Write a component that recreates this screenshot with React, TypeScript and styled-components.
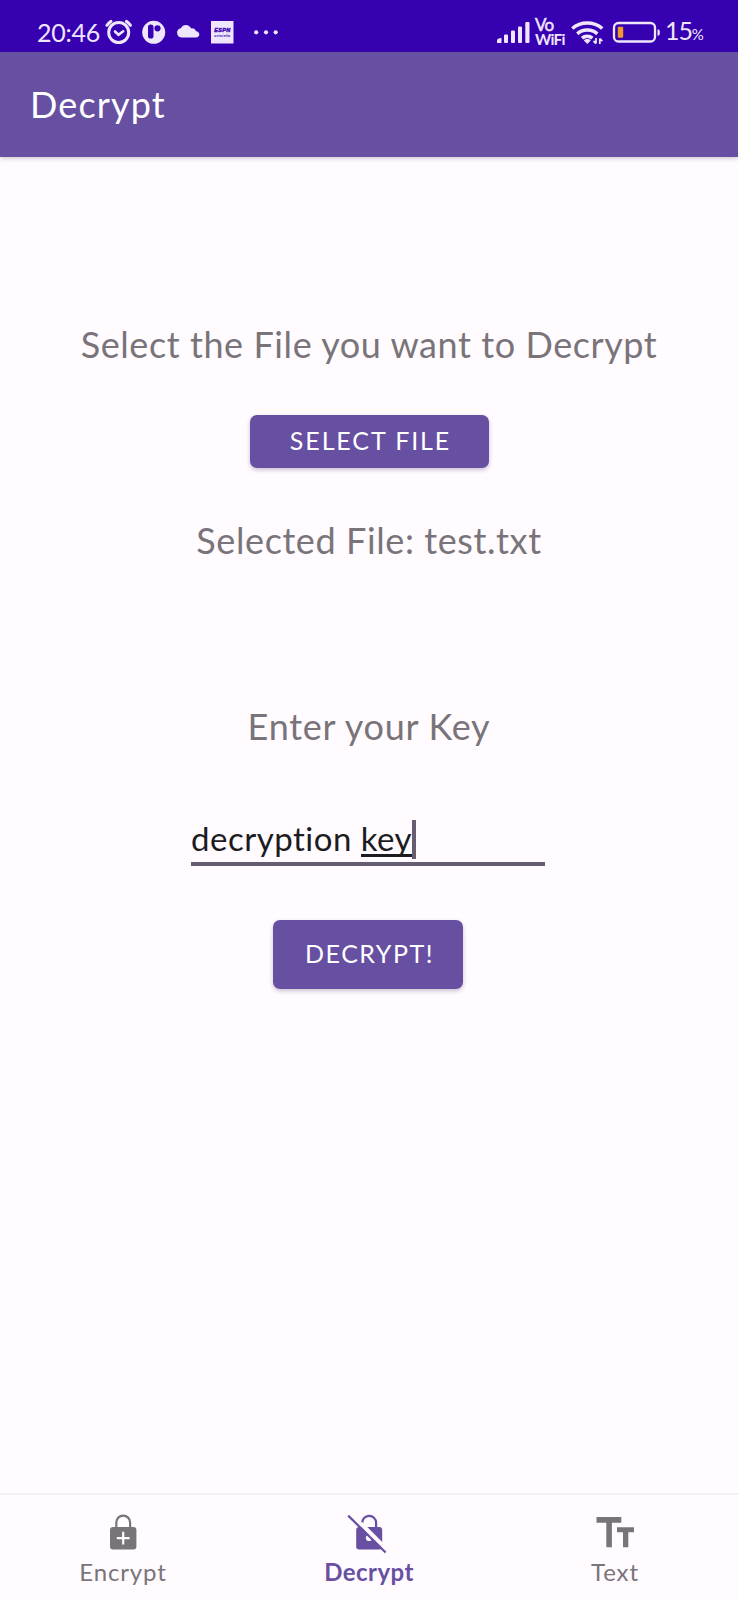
import React from 'react';
import styled, { createGlobalStyle } from 'styled-components';

const GlobalStyle = createGlobalStyle`
  * { box-sizing: border-box; }
  body { margin: 0; background: #fffbfe; font-family: Lato, "Open Sans", sans-serif; }
`;

const Screen = styled.div`
  display: flex;
  flex-direction: column;
  width: 738px;
  height: 1600px;
  background: #fffbfe;
  overflow: hidden;
`;

const StatusBar = styled.header`
  display: flex;
  justify-content: space-between;
  height: 52px;
  padding: 12px 38px 0 37px;
  background: #3700b1;
  color: #efe6fd;
`;

const StatusGroup = styled.div`
  display: flex;
  align-items: center;
  height: 40px;
`;

const Clock = styled.span`
  width: 68px;
  font-size: 25px;
  line-height: 40px;
  letter-spacing: -0.25px;
  white-space: nowrap;
`;

const NetworkLabel = styled.div`
  display: flex;
  flex-direction: column;
  width: 35px;
  font-size: 15.5px;
  font-weight: 700;
  line-height: 14px;
  letter-spacing: -0.8px;
`;

const NetworkLine = styled.span<{ $large?: boolean }>`
  height: 14px;
  font-size: ${(p) => (p.$large ? 17 : 15.5)}px;
  font-weight: ${(p) => (p.$large ? 400 : 700)};
  -webkit-text-stroke: ${(p) => (p.$large ? 0.5 : 0)}px currentColor;
`;

const BatteryLevel = styled.span`
  width: 35px;
  font-size: 25px;
  line-height: 40px;
  letter-spacing: -1.1px;
  white-space: nowrap;

  small { font-size: 15px; }
`;

const AppBar = styled.div`
  position: relative;
  display: flex;
  flex: none;
  height: 105px;
  padding: 30px 30px;
  background: #6750a2;
  box-shadow: 0 1px 5px rgba(60, 45, 80, 0.3);
`;

const Title = styled.h1`
  margin: 0;
  color: #fff;
  font-size: 36px;
  font-weight: 400;
  line-height: 44px;
  letter-spacing: 1.15px;
`;

const Content = styled.main`
  display: flex;
  flex: 1;
  flex-direction: column;
  align-items: center;
  padding-top: 165px;
`;

const Label = styled.p<{ $top?: number; $spacing: number }>`
  margin: ${(p) => p.$top ?? 0}px 0 0;
  color: #79747a;
  font-size: 36px;
  line-height: 44px;
  letter-spacing: ${(p) => p.$spacing}px;
  white-space: nowrap;
`;

const Button = styled.button<{ $width: number; $height: number; $top: number; $spacing: number; $shift: number }>`
  width: ${(p) => p.$width}px;
  height: ${(p) => p.$height}px;
  margin: ${(p) => p.$top}px ${(p) => p.$shift}px 0 0;
  padding: 0 0 3px 3px;
  border: 0;
  border-radius: 7px;
  background: #674fa2;
  box-shadow: 0 2px 4px rgba(60, 45, 90, 0.28);
  color: #fff;
  font-family: inherit;
  font-size: 25px;
  line-height: 30px;
  letter-spacing: ${(p) => p.$spacing}px;
  white-space: nowrap;
`;

const Field = styled.div`
  display: flex;
  align-items: flex-start;
  width: 354px;
  height: 46px;
  margin: 72px 2px 0 0;
  border-bottom: 4px solid #665d70;
  color: #1c1b1f;
  font-size: 33px;
  line-height: 37px;
  letter-spacing: 0.5px;
  white-space: pre;
`;

const Composing = styled.span`
  height: 37px;
  border-bottom: 3px solid #1c1b1f;
`;

const Caret = styled.span`
  width: 4px;
  height: 39px;
  background: #665d70;
`;

const Nav = styled.nav`
  display: grid;
  grid-template-columns: repeat(3, 1fr);
  height: 107px;
  border-top: 2px solid #f5f0f5;
`;

const NavItem = styled.a<{ $active?: boolean; $spacing: number }>`
  display: flex;
  flex-direction: column;
  align-items: center;
  padding-top: 17px;
  color: ${(p) => (p.$active ? '#674fa2' : '#79747a')};
  font-size: 24px;
  font-weight: ${(p) => (p.$active ? 700 : 400)};
  line-height: 30px;
  letter-spacing: ${(p) => p.$spacing}px;

  svg {
    margin-bottom: 5px;
    overflow: visible;
  }
`;

const StatusIcons = () => (
  <svg width="175" height="40" viewBox="105 12 175 40" fill="none">
    <g stroke="#efe6fd" strokeWidth="3" strokeLinecap="round">
      <circle cx="118.700" cy="32.500" r="10" />
      <path d="M107 25.300c1-1.600 2.300-2.900 4-3.900M130.400 25.300c-1-1.600-2.300-2.900-4-3.900" />
      <path d="M115 31.500l3.500 3.300 4.700-3.500" strokeWidth="2.600" />
    </g>
    <circle cx="153.700" cy="32.300" r="11.500" fill="#efe6fd" />
    <rect x="148" y="24.500" width="5.500" height="14" rx="2.600" fill="#3700b1" />
    <circle cx="157.500" cy="28.300" r="3.100" fill="#3700b1" />
    <path d="M181.500 37.500a4.700 4.700 0 0 1-.6-9.300c1.200-2 2.800-3.200 4.900-3.200 2.400 0 4.200 1.300 5.400 3.400 2.600-.2 4.200.8 4.600 2.700 2.200.3 3.500 1.700 3.500 3.500 0 1.700-1.300 2.900-3.300 2.900z" fill="#efe6fd" />
    <rect x="211" y="21" width="22.500" height="22.500" fill="#efe6fd" />
    <text x="214.300" y="32" fontFamily="Liberation Sans" fontSize="5.500" fontWeight="700" fontStyle="italic" fill="#3700b1" stroke="#3700b1" strokeWidth=".4" textLength="16">ESPN</text>
    <text x="214.300" y="36.500" fontFamily="Liberation Sans" fontSize="4" fontWeight="700" fill="#3700b1" textLength="16">cricinfo</text>
    <g fill="#efe6fd">
      <circle cx="256.200" cy="32.300" r="2.100" />
      <circle cx="266" cy="32.300" r="2.100" />
      <circle cx="275.700" cy="32.300" r="2.100" />
    </g>
  </svg>
);

const SignalIcon = () => (
  <svg width="39" height="40" viewBox="496 12 39 40" fill="#efe6fd">
    <path d="M497 43v-2.500c0-1.600 1.500-2.500 4.500-2.500v5z" />
    <rect x="504" y="34.500" width="4" height="8.500" rx="1" />
    <rect x="511" y="30.500" width="4" height="12.500" rx="1" />
    <rect x="518" y="26.500" width="4" height="16.500" rx="1" />
    <rect x="525.300" y="22" width="4.200" height="21" rx="1" />
  </svg>
);

const WifiBatteryIcon = () => (
  <svg width="95" height="40" viewBox="570 12 95 40" fill="none">
    <g stroke="#efe6fd" strokeWidth="3.600">
      <path d="M572.300 28.500c8.500-7.300 21.500-7.300 30 0" />
      <path d="M577.300 33.800c5.700-5 14.300-5 20 0" />
      <path d="M582 38.200c3-2.500 7.400-2.500 10.400 0" />
    </g>
    <path d="M583.800 40.500c2-1.900 5-1.900 7 0l-3.500 3.500z" fill="#efe6fd" />
    <path d="M596 38v5.500M596 43.500l-2.500-2.500M599.800 44v-5.500M599.800 38.500l2.500 2.600" stroke="#efe6fd" strokeWidth="1.800" />
    <rect x="614" y="23" width="41" height="18.500" rx="4.500" stroke="#efe6fd" strokeWidth="2.300" />
    <rect x="617.800" y="26.800" width="5.400" height="11" rx="1" fill="#f09a2c" />
    <path d="M657.500 29.500c2 0 2.300.5 2.300 3s-.3 3.200-2.300 3.200z" fill="#efe6fd" />
  </svg>
);

const LockPlusIcon = () => (
  <svg width="40" height="40" viewBox="0 0 40 40" fill="none">
    <path d="M13.300 16V10.500a6.900 6.900 0 0 1 13.800 0V16" stroke="currentColor" strokeWidth="2.200" />
    <rect x="7" y="15" width="26.400" height="22.500" rx="3" fill="currentColor" />
    <path d="M20.200 19.800v12.800M13.800 26.200h12.800" stroke="#fffbfe" strokeWidth="2.200" />
  </svg>
);

const LockOffIcon = () => (
  <svg width="40" height="40" viewBox="0 0 40 40" fill="none">
    <path d="M13.300 11a6.900 6.900 0 0 1 13.800-.5V16" stroke="currentColor" strokeWidth="2.200" />
    <rect x="7.200" y="15" width="26" height="22.500" rx="3" fill="currentColor" />
    <circle cx="20" cy="26" r="3.100" fill="#fffbfe" />
    <path d="M11.500 11.200l27 27" stroke="#fffbfe" strokeWidth="4.200" />
    <path d="M-.8 3.600l37.400 36.900" stroke="currentColor" strokeWidth="2.200" />
  </svg>
);

const TextSizeIcon = () => (
  <svg width="40" height="40" viewBox="0 0 40 40" fill="currentColor">
    <path d="M1.500 5h24.800v5.700h-9.400v24.600h-5.600V10.700H1.500zM22 15.200h17v5h-5.700v15.100h-5.300V20.200h-6z" />
  </svg>
);

export default function App() {
  return (
    <>
      <GlobalStyle />
      <Screen>
        <StatusBar>
          <StatusGroup>
            <Clock>20:46</Clock>
            <StatusIcons />
          </StatusGroup>
          <StatusGroup>
            <SignalIcon />
            <NetworkLabel>
              <NetworkLine $large>Vo</NetworkLine>
              <NetworkLine>WiFi</NetworkLine>
            </NetworkLabel>
            <WifiBatteryIcon />
            <BatteryLevel>15<small>%</small></BatteryLevel>
          </StatusGroup>
        </StatusBar>
        <AppBar>
          <Title>Decrypt</Title>
        </AppBar>
        <Content>
          <Label $spacing={0.58}>Select the File you want to Decrypt</Label>
          <Button $width={239} $height={53} $top={49} $spacing={1.9} $shift={0}>SELECT FILE</Button>
          <Label $top={50} $spacing={0.6}>Selected File: test.txt</Label>
          <Label $top={142} $spacing={0.75}>Enter your Key</Label>
          <Field>
            <span>decryption </span>
            <Composing>key</Composing>
            <Caret />
          </Field>
          <Button $width={190} $height={69} $top={54} $spacing={1.5} $shift={2}>DECRYPT!</Button>
        </Content>
        <Nav>
          <NavItem $spacing={0.85}>
            <LockPlusIcon />
            Encrypt
          </NavItem>
          <NavItem $active $spacing={0.45}>
            <LockOffIcon />
            Decrypt
          </NavItem>
          <NavItem $spacing={0.9}>
            <TextSizeIcon />
            Text
          </NavItem>
        </Nav>
      </Screen>
    </>
  );
}
